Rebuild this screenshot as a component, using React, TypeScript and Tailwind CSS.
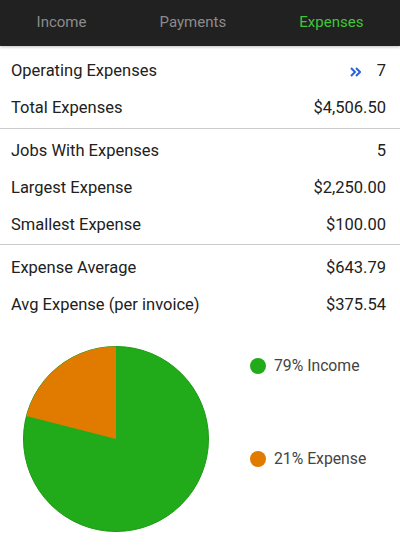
import React from "react";

const Row = ({ label, value, extra }: { label: string; value: string; extra?: React.ReactNode }) => (
  <div className="flex h-[37px] items-center justify-between pl-[11px] pr-[14px] text-[16.5px] text-[#212121]">
    <span>{label}</span>
    <span className="flex items-center">
      {extra}
      {value}
    </span>
  </div>
);

export default function App() {
  return (
    <div className="w-[400px] h-[547px] bg-white overflow-hidden" style={{ fontFamily: "Roboto, 'Noto Sans', sans-serif" }}>
      <div className="relative z-10 flex h-[46px] items-center justify-around bg-[#212121] pb-[2px] text-[15px] shadow-[0_1px_3px_rgba(0,0,0,0.25)]">
        <span className="text-[#8c8c8c]">Income</span>
        <span className="text-[#8c8c8c]">Payments</span>
        <span className="text-[#41c43a]">Expenses</span>
      </div>
      <div className="pt-[7px] pb-[1px]">
        <Row
          label="Operating Expenses"
          value="7"
          extra={
            <svg width="11" height="10" viewBox="0 0 11 10" className="mr-[16px]">
              <path d="M1 1 L5 5 L1 9 M6 1 L10 5 L6 9" fill="none" stroke="#2a62e0" strokeWidth="2" />
            </svg>
          }
        />
        <Row label="Total Expenses" value="$4,506.50" />
      </div>
      <div className="h-px bg-[#cccccc]" />
      <div className="pt-[4px]">
        <Row label="Jobs With Expenses" value="5" />
        <Row label="Largest Expense" value="$2,250.00" />
        <Row label="Smallest Expense" value="$100.00" />
      </div>
      <div className="h-px bg-[#cccccc]" />
      <div className="pt-[5px]">
        <Row label="Expense Average" value="$643.79" />
        <Row label="Avg Expense (per invoice)" value="$375.54" />
      </div>
      <div className="mt-[15px] flex">
        <svg width="200" height="200" viewBox="0 0 200 200" className="ml-[16px] shrink-0">
          <circle cx="100" cy="100" r="92.5" fill="#21ab1a" stroke="#1c9a16" strokeWidth="1" />
          <path d="M100 100 L100 7.5 A92.5 92.5 0 0 0 10.4 77 Z" fill="#e07b00" />
        </svg>
        <div className="ml-[34px] flex flex-col gap-[70px] pt-[15px] text-[15.75px] leading-[23px] text-[#444444]">
          <div className="flex items-center">
            <span className="mr-[8px] inline-block h-[16px] w-[16px] rounded-full bg-[#21ab1a]" />
            79% Income
          </div>
          <div className="flex items-center">
            <span className="mr-[8px] inline-block h-[16px] w-[16px] rounded-full bg-[#e07b00]" />
            21% Expense
          </div>
        </div>
      </div>
    </div>
  );
}
